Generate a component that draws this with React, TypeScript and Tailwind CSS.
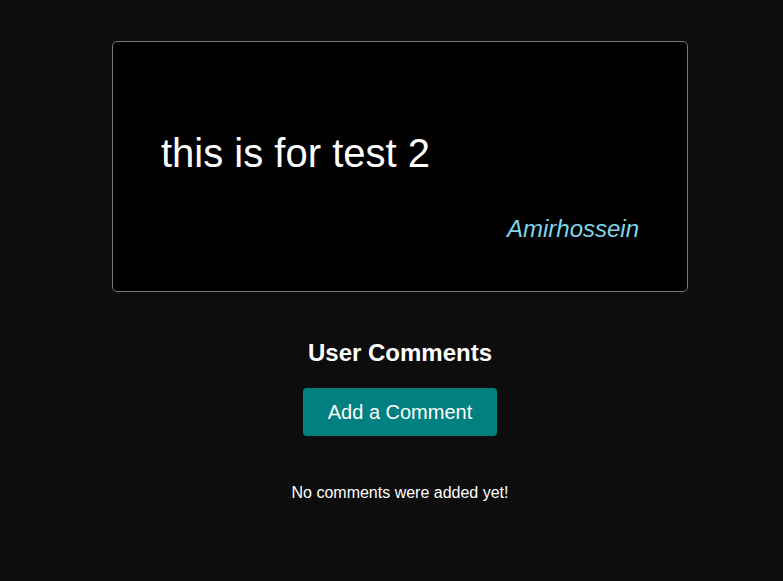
export default function App() {
  return (
    <div className="min-h-screen bg-[#0d0d0d] pt-[41px] pl-[17px] text-white font-['Liberation_Sans',Arial,sans-serif]">
      <div className="mx-auto w-[576px] h-[251px] rounded-[5px] border border-[#777777] bg-black px-[48px] pt-[88px]">
        <p className="text-[40px] leading-[46px]">this is for test 2</p>
        <p className="mt-[39px] text-right text-[24px] leading-[28px] italic text-[#7fd3ea]">Amirhossein</p>
      </div>
      <div className="flex flex-col items-center">
        <h2 className="mt-[47px] text-[24px] leading-[28px] font-bold">User Comments</h2>
        <button className="mt-[21px] w-[194px] h-[48px] rounded-[4px] bg-[#008080] text-[20px] leading-[23px] text-white">
          Add a Comment
        </button>
        <p className="mt-[48px] text-[16px] leading-[18px]">No comments were added yet!</p>
      </div>
    </div>
  );
}
